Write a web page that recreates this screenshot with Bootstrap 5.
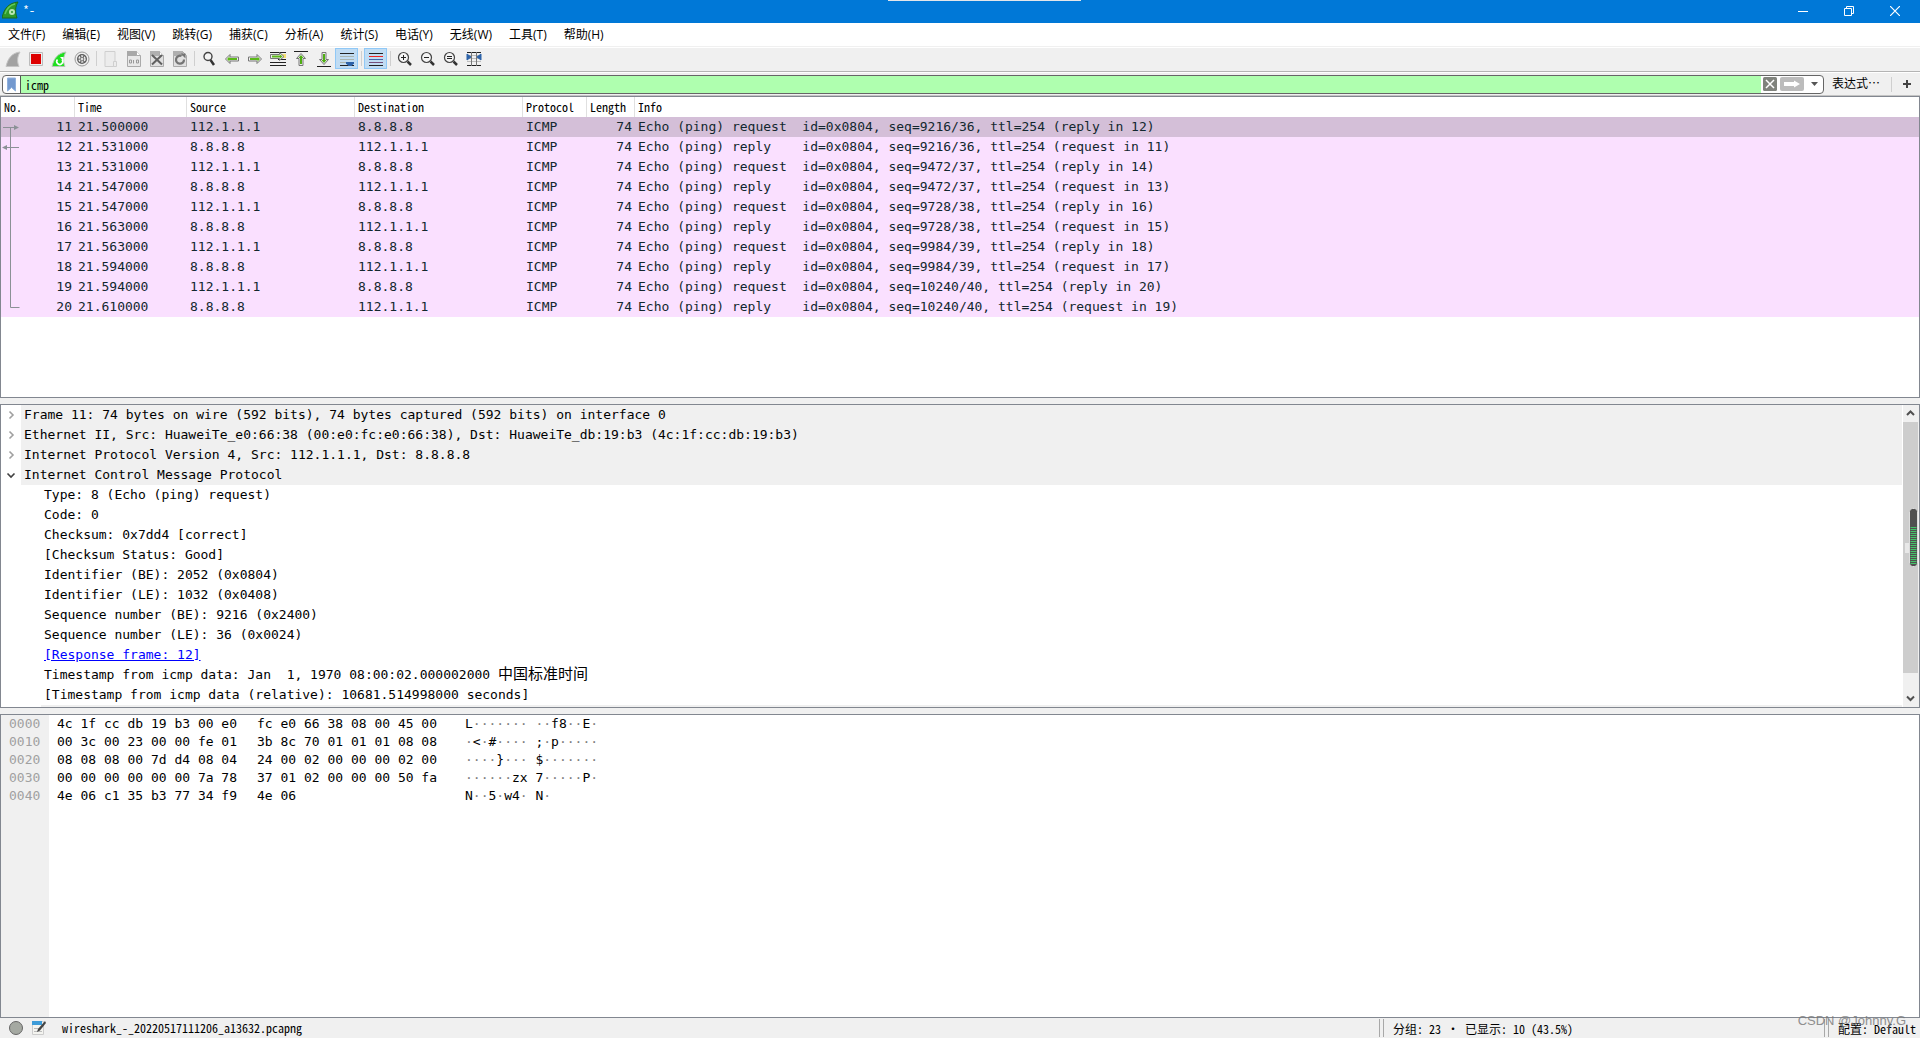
<!DOCTYPE html>
<html lang="zh-CN">
<head>
<meta charset="utf-8">
<meta name="viewport" content="width=device-width, initial-scale=1">
<title>*-</title>
<link href="https://cdn.jsdelivr.net/npm/bootstrap@5.3.0/dist/css/bootstrap.min.css" rel="stylesheet">
<style>
  :root { --ui: "Open Sans", "Noto Sans CJK SC", sans-serif; --song: "Noto Sans Mono CJK SC", "Noto Sans CJK SC", monospace; --mono: "DejaVu Sans Mono", "Noto Sans CJK SC", monospace; --edge: #828790; --chrome: #f0f0f0; }
  body { height: 100vh; overflow: hidden; background: var(--chrome); color: #000; font: 12px/16px var(--ui); }
  button { border: 0; background: none; padding: 0; color: inherit; font: inherit; }
  svg { display: block; }
  .titlebar { height: 23px; background: #0078d7; color: #fff; padding: 0 2px; }
  .titlebar .caption { font: 12px/20px var(--song); padding-left: 4px; }
  .winbtn { width: 46px; height: 21px; display: flex; align-items: center; justify-content: center; }
  .peek { position: absolute; top: 0; left: 46.25%; width: 193px; height: 1px; background: #e3e6ea; }
  .menubar { height: 24px; gap: 1px; background: #fff; border-bottom: 1px solid var(--chrome); }
  .menubar a { color: #000; text-decoration: none; padding: 0 8px; line-height: 23px; }
  .tools { height: 25px; padding-left: 1px; padding-bottom: 2px; border-bottom: 1px solid #b4b4b4; border-top: 1px solid #fff; }
  .tool { width: 23px; height: 21px; display: flex; align-items: center; justify-content: center; border: 1px solid transparent; }
  .tool.on { background: #c0dcf3; border-color: #90c8f6; }
  .rule { width: 6px; display: flex; justify-content: center; }
  .rule::before { content: ""; width: 1px; height: 15px; background: #cfcfcf; }
  .filterbar { height: 24px; border-top: 1px solid #fff; border-bottom: 1px solid #c4c4c4; padding: 2px 4px 2px 2px; }
  .filterbox { height: 19px; border: 1px solid #666; border-radius: 4px; background: #fff; overflow: hidden; }
  .filterbox input { border: 0; border-left: 1px solid #555; outline: 0; background: #afffaf; font: 12px/17px var(--song); padding: 0 4px; height: 17px; min-width: 0; }
  .filterend { padding-left: 2px; gap: 3px; }
  .bm { width: 17px; display: flex; justify-content: center; }
  .drop { width: 16px; display: flex; justify-content: center; }
  .pane { min-height: 0; overflow: hidden; background: #fff; border: 1px solid var(--edge); position: relative; }
  .splitter { height: 6px; }
  .p-list { flex: 302 1 0; } .p-tree, .p-hex { flex: 304 1 0; }
  .packets { table-layout: fixed; width: 100%; border-collapse: separate; border-spacing: 0; white-space: pre; font: 13px/20px var(--mono); color: #12272e; }
  .packets th { font: 12px/20px var(--song); color: #000; border-right: 1px solid #e0e0e0; padding: 0 3px; height: 20px; }
  .packets th:last-child { border: 0; }
  .packets td { padding: 0 3px; height: 20px; }
  .packets tbody { background: #fae0ff; }
  .packets tr.cur { background: #d4bfd8; }
  .num { text-align: right; }
  .c1 { width: 74px; } .c2 { width: 112px; } .c3 { width: 168px; } .c5 { width: 64px; } .c6 { width: 48px; }
  .related { position: absolute; left: 0; top: 20px; }
  .tree { font: 13px/20px var(--mono); list-style: none; margin: 0; padding: 0; overflow: hidden; min-width: 0; }
  .tree > li { display: flex; height: 20px; white-space: pre; }
  .tree .twist { width: 20px; display: flex; align-items: center; justify-content: center; }
  .tree .proto { background: var(--chrome); flex: 1; padding-left: 3px; }
  .tree .leaf { padding-left: 43px; }
  .tree .nextproto { background: var(--chrome); flex: 1; margin-left: 40px; }
  .tree a { color: #00f; }
  .song-lg { font-size: 15px; line-height: 18px; }
  .vbar { width: 16px; margin-left: 1px; background: var(--chrome); }
  .vbar button { height: 17px; display: flex; align-items: center; justify-content: center; width: 15px; }
  .thumb { width: 15px; background: #cdcdcd; flex: 251 1 0; } .track { flex: 17 1 0; }
  .meter { position: absolute; right: 1px; top: 103px; }
  .hex { font: 13px/18px var(--mono); }
  .hex pre { font: inherit; margin: 0; overflow: visible; }
  .offs { width: 48px; background: var(--chrome); color: #a0a0a0; padding-left: 8px; }
  .octets-a { width: 208px; padding-left: 8px; } .octets-b { width: 208px; }
  .asc i { color: #808080; font-style: normal; }
  .statusbar { height: 20px; font: 12px/20px var(--song); padding-left: 8px; }
  .cell { border-left: 1px solid #a8a8a8; height: 18px; position: relative; padding-left: 13px; line-height: 20px; }
  .cell::before { content: ""; position: absolute; left: 3px; top: 0; bottom: 0; width: 1px; background: #a8a8a8; }
  .cell-count { width: 445px; } .cell-conf { width: 96px; white-space: nowrap; }
  .wmark { position: absolute; right: 14px; bottom: 8px; font: 13px/18px "Liberation Sans", sans-serif; color: #777; opacity: .8; }
</style>
<script src="https://cdn.jsdelivr.net/npm/bootstrap@5.3.0/dist/js/bootstrap.bundle.min.js"></script>
</head>
<body class="d-flex flex-column position-relative">

<header class="titlebar d-flex align-items-start flex-shrink-0">
  <svg width="17" height="20" viewBox="0 1 17 20"><path d="M0 19C2 9 7 4 16 3C13 8 13 13 15 19Z" fill="#2e9a2a" stroke="#1b6d1b"/><path d="M3 15C5 9 8 6 13 5" stroke="#62c95c" stroke-width="1.5" fill="none"/><circle cx="10" cy="13" r="3" fill="#b9e6b5"/><circle cx="10" cy="13" r="1" fill="#2e9a2a"/></svg>
  <span class="caption">*-</span>
  <div class="ms-auto d-flex">
    <button class="winbtn" aria-label="最小化"><svg width="10" height="10"><path d="M0 5.5h10" stroke="#fff"/></svg></button>
    <button class="winbtn" aria-label="还原"><svg width="10" height="10" fill="none" stroke="#fff"><path d="M.5 2.500h7v7h-7zM2.500 2.500v-2h7v7h-2"/></svg></button>
    <button class="winbtn" aria-label="关闭"><svg width="10" height="10" stroke="#fff" stroke-width="1.200"><path d="M0 0L10 10M10 0L0 10"/></svg></button>
  </div>
  <div class="peek"></div>
</header>

<nav class="menubar d-flex flex-shrink-0">
  <a href="#">文件(F)</a><a href="#">编辑(E)</a><a href="#">视图(V)</a><a href="#">跳转(G)</a><a href="#">捕获(C)</a><a href="#">分析(A)</a><a href="#">统计(S)</a><a href="#">电话(Y)</a><a href="#">无线(W)</a><a href="#">工具(T)</a><a href="#">帮助(H)</a>
</nav>

<div class="tools d-flex align-items-center flex-shrink-0" role="toolbar">
  <button class="tool" aria-label="开始捕获"><svg width="16" height="16"><path d="M1 15.500C3 7 7 2 15 1C12 6 12 11 14 15.500Z" fill="#a2a2a2" stroke="#c4c4c4"/></svg></button>
  <button class="tool" aria-label="停止捕获"><svg width="16" height="16"><path d="M1.500 1.500h13v13h-13z" fill="#eee" stroke="#bbb"/><path d="M3 3h10v10H3z" fill="#d00"/></svg></button>
  <button class="tool" aria-label="重新开始"><svg width="16" height="16"><path d="M1 15.500C3 7 7 2 15 1C12 6 12 11 14 15.500Z" fill="#1de01d" stroke="#b5c9b5"/><path d="M6.500 8.500a3 3 0 1 0 4.500 0" fill="none" stroke="#fff" stroke-width="1.600"/><path d="M9 6h3.500v4z" fill="#fff"/></svg></button>
  <button class="tool" aria-label="捕获选项"><svg width="16" height="16"><circle cx="8" cy="8" r="7" fill="#eee" stroke="#999"/><circle cx="8" cy="8" r="5" fill="#5c5c5c"/><circle cx="8" cy="8" r="3" fill="none" stroke="#eee" stroke-width="1.500" stroke-dasharray="2.200 1"/><circle cx="8" cy="8" r="1.500" fill="#ddd"/></svg></button>
  <span class="rule"></span>
  <button class="tool" aria-label="打开"><svg width="16" height="16"><path d="M2 .5h10v15H2z" fill="#ececec" stroke="#cfcfcf"/><path d="M10.500 10.500h3v5h-3z" fill="#ececec" stroke="#cfcfcf"/></svg></button>
  <button class="tool" aria-label="保存"><svg width="16" height="16"><path d="M1.500 .5h9l4 4v11h-13z" fill="#e8e8e8" stroke="#aaa"/><path d="M1 0h10v5H1z" fill="#a8a8a8"/><path d="M10.500 .5v4h4" fill="#fff" stroke="#aaa"/><path d="M3.500 9h2v3h-2zM7.500 9v3.500M10.500 9h2v3h-2z" fill="none" stroke="#999"/></svg></button>
  <button class="tool" aria-label="关闭文件"><svg width="16" height="16"><path d="M1.500 .5h9l4 4v11h-13z" fill="#e0e0e0" stroke="#aaa"/><path d="M1 0h10v5H1z" fill="#b0b0b0"/><path d="M10.500 .5v4h4" fill="#fff" stroke="#aaa"/><path d="M3 4L13 13.500M13 4L3 13.500" stroke="#606060" stroke-width="2"/></svg></button>
  <button class="tool" aria-label="重新加载"><svg width="16" height="16"><path d="M1.500 .5h9l4 4v11h-13z" fill="#e0e0e0" stroke="#aaa"/><path d="M1 0h10v5H1z" fill="#b0b0b0"/><path d="M12 8.500A4 4 0 1 1 9.500 5" fill="none" stroke="#757575" stroke-width="2.200"/><path d="M8.500 2.500h5v5z" fill="#757575"/></svg></button>
  <span class="rule"></span>
  <button class="tool" aria-label="查找"><svg width="16" height="16"><circle cx="7" cy="5.500" r="4" fill="#f4f4f4" stroke="#444" stroke-width="1.400"/><path d="M9.500 9L13 14" stroke="#333" stroke-width="2.500"/></svg></button>
  <button class="tool" aria-label="后退"><svg width="16" height="16"><path d="M1.500 8L6 3.500v2.500h8.500v4H6v2.500z" fill="#f0f0f0" stroke="#777"/><path d="M3 8l2.500-2.500V7H13v2H5.500v1.500z" fill="#5cb81a"/></svg></button>
  <button class="tool" aria-label="前进"><svg width="16" height="16"><path d="M14.500 8L10 3.500v2.500H1.500v4H10v2.500z" fill="#f0f0f0" stroke="#777"/><path d="M13 8l-2.500-2.500V7H3v2h7.500v1.500z" fill="#5cb81a"/></svg></button>
  <button class="tool" aria-label="转到分组"><svg width="16" height="16"><path d="M0 1.500h16M0 11.500h16M0 14.500h16M8 8.500h8" stroke="#222"/><path d="M11 3h5v4h-5z" fill="#f5e070"/><path d="M14 5.500L9.500 1.500v2H.5v4h9v2z" fill="#f0f0f0" stroke="#777"/><path d="M12.500 5.500L10 3.500v1H2v2h8v1z" fill="#5cb81a"/></svg></button>
  <button class="tool" aria-label="首个分组"><svg width="16" height="16"><path d="M1 .5h14" stroke="#222"/><path d="M8 2.500L3.500 7.500h2.500v7h4v-7h2.500z" fill="#eee" stroke="#777"/><path d="M8 4L5.500 7H7v6h2V7h1.500z" fill="#4fae12"/></svg></button>
  <button class="tool" aria-label="最新分组"><svg width="16" height="16"><path d="M1 15.500h14" stroke="#222"/><path d="M8 13.500L3.500 8.500h2.500v-7h4v7h2.500z" fill="#eee" stroke="#777"/><path d="M8 12L5.500 9H7V3h2v6h1.500z" fill="#4fae12"/></svg></button>
  <button class="tool on" aria-label="自动滚动"><svg width="16" height="16"><path d="M1 2.500h14M1 14.500h14" stroke="#222"/><path d="M1 5.500h14M1 8.500h14M1 11.500h14" stroke="#aab4ae"/><path d="M7 11h8v1.500l-2.500 2.500h-3L7 12.500z" fill="#2d62a8"/></svg></button>
  <span class="rule"></span>
  <button class="tool on" aria-label="着色"><svg width="16" height="16"><path d="M1 2.500h14M1 14.500h14" stroke="#222"/><path d="M1 5.500h14" stroke="#e22"/><path d="M1 8.500h14" stroke="#4465aa"/><path d="M1 11.500h14" stroke="#75507b"/></svg></button>
  <span class="rule"></span>
  <button class="tool" aria-label="放大"><svg width="16" height="16"><circle cx="6.500" cy="6.500" r="5" fill="#f4f4f4" stroke="#444" stroke-width="1.200"/><path d="M10.500 10.500L14 14" stroke="#333" stroke-width="2.500"/><path d="M4 6.500h5M6.500 4v5" stroke="#222"/></svg></button>
  <button class="tool" aria-label="缩小"><svg width="16" height="16"><circle cx="6.500" cy="6.500" r="5" fill="#f4f4f4" stroke="#444" stroke-width="1.200"/><path d="M10.500 10.500L14 14" stroke="#333" stroke-width="2.500"/><path d="M4 6.500h5" stroke="#222"/></svg></button>
  <button class="tool" aria-label="原始大小"><svg width="16" height="16"><circle cx="6.500" cy="6.500" r="5" fill="#f4f4f4" stroke="#444" stroke-width="1.200"/><path d="M10.500 10.500L14 14" stroke="#333" stroke-width="2.500"/><path d="M4 5.500h5M4 7.500h5" stroke="#222"/></svg></button>
  <button class="tool" aria-label="调整列宽"><svg width="16" height="16"><path d="M1 1.500h14M1 14.500h14" stroke="#222"/><path d="M1 4.500h14M1 7.500h14M1 10.500h14" stroke="#bbb"/><path d="M5.500 1v14M10.500 1v14" stroke="#777"/><path d="M1 3l4 3-4 3zM15 3l-4 3 4 3z" fill="#2d62a8" stroke="#2d62a8"/></svg></button>
</div>

<div class="filterbar d-flex align-items-center flex-shrink-0">
  <div class="filterbox d-flex flex-fill align-items-center">
    <button class="bm" aria-label="书签"><svg width="9" height="15"><path d="M.5 1h8v13l-4-3.500-4 3.500z" fill="#7399cf" stroke="#8fb0dc"/></svg></button>
    <input class="flex-fill" type="text" value="icmp" aria-label="显示过滤器">
    <div class="filterend d-flex align-items-center">
      <button aria-label="清除"><svg width="14" height="14"><rect width="14" height="14" rx="1.500" fill="#80837d"/><path d="M3 3l8 8M11 3l-8 8" stroke="#fff" stroke-width="1.500"/></svg></button>
      <button aria-label="应用"><svg width="24" height="14"><rect width="24" height="14" rx="2" fill="#bcbcbc"/><path d="M4 5h10V3.500L20 7l-6 3.500V9H4z" fill="#fff"/></svg></button>
      <button class="drop" aria-label="历史"><svg width="7" height="5"><path d="M0 0h7L3.500 4z" fill="#555"/></svg></button>
    </div>
  </div>
  <button class="ps-2 pe-1">表达式⋯</button>
  <span class="rule ms-1"></span>
  <button class="ps-2 pe-1" aria-label="添加"><svg width="10" height="10"><path d="M1 5h8M5 1v8" stroke="#444" stroke-width="2"/></svg></button>
</div>

<main class="d-flex flex-column flex-fill overflow-hidden">
  <section class="pane p-list">
    <table class="packets">
      <colgroup><col class="c1"><col class="c2"><col class="c3"><col class="c3"><col class="c5"><col class="c6"><col></colgroup>
      <thead><tr><th>No.</th><th>Time</th><th>Source</th><th>Destination</th><th>Protocol</th><th>Length</th><th>Info</th></tr></thead>
      <tbody>
        <tr class="cur"><td class="num">11</td><td>21.500000</td><td>112.1.1.1</td><td>8.8.8.8</td><td>ICMP</td><td class="num">74</td><td>Echo (ping) request  id=0x0804, seq=9216/36, ttl=254 (reply in 12)</td></tr>
        <tr><td class="num">12</td><td>21.531000</td><td>8.8.8.8</td><td>112.1.1.1</td><td>ICMP</td><td class="num">74</td><td>Echo (ping) reply    id=0x0804, seq=9216/36, ttl=254 (request in 11)</td></tr>
        <tr><td class="num">13</td><td>21.531000</td><td>112.1.1.1</td><td>8.8.8.8</td><td>ICMP</td><td class="num">74</td><td>Echo (ping) request  id=0x0804, seq=9472/37, ttl=254 (reply in 14)</td></tr>
        <tr><td class="num">14</td><td>21.547000</td><td>8.8.8.8</td><td>112.1.1.1</td><td>ICMP</td><td class="num">74</td><td>Echo (ping) reply    id=0x0804, seq=9472/37, ttl=254 (request in 13)</td></tr>
        <tr><td class="num">15</td><td>21.547000</td><td>112.1.1.1</td><td>8.8.8.8</td><td>ICMP</td><td class="num">74</td><td>Echo (ping) request  id=0x0804, seq=9728/38, ttl=254 (reply in 16)</td></tr>
        <tr><td class="num">16</td><td>21.563000</td><td>8.8.8.8</td><td>112.1.1.1</td><td>ICMP</td><td class="num">74</td><td>Echo (ping) reply    id=0x0804, seq=9728/38, ttl=254 (request in 15)</td></tr>
        <tr><td class="num">17</td><td>21.563000</td><td>112.1.1.1</td><td>8.8.8.8</td><td>ICMP</td><td class="num">74</td><td>Echo (ping) request  id=0x0804, seq=9984/39, ttl=254 (reply in 18)</td></tr>
        <tr><td class="num">18</td><td>21.594000</td><td>8.8.8.8</td><td>112.1.1.1</td><td>ICMP</td><td class="num">74</td><td>Echo (ping) reply    id=0x0804, seq=9984/39, ttl=254 (request in 17)</td></tr>
        <tr><td class="num">19</td><td>21.594000</td><td>112.1.1.1</td><td>8.8.8.8</td><td>ICMP</td><td class="num">74</td><td>Echo (ping) request  id=0x0804, seq=10240/40, ttl=254 (reply in 20)</td></tr>
        <tr><td class="num">20</td><td>21.610000</td><td>8.8.8.8</td><td>112.1.1.1</td><td>ICMP</td><td class="num">74</td><td>Echo (ping) reply    id=0x0804, seq=10240/40, ttl=254 (request in 19)</td></tr>
      </tbody>
    </table>
    <svg class="related" width="20" height="200" fill="none" stroke="#8b9196"><path d="M2 10.500h14M9.500 10.500v180h9M5 30.500h13"/><path d="M13 8l5 2.500-5 2.500zM6 28l-5 2.500 5 2.500z" fill="#8b9196" stroke="none"/></svg>
  </section>
  <div class="splitter flex-shrink-0"></div>
  <section class="pane p-tree d-flex">
    <ul class="tree flex-fill">
      <li><span class="twist"><svg width="7" height="10"><path d="M1.500 1.500L5 5l-3.500 3.500" fill="none" stroke="#a0a0a0" stroke-width="1.600"/></svg></span><span class="proto">Frame 11: 74 bytes on wire (592 bits), 74 bytes captured (592 bits) on interface 0</span></li>
      <li><span class="twist"><svg width="7" height="10"><path d="M1.500 1.500L5 5l-3.500 3.500" fill="none" stroke="#a0a0a0" stroke-width="1.600"/></svg></span><span class="proto">Ethernet II, Src: HuaweiTe_e0:66:38 (00:e0:fc:e0:66:38), Dst: HuaweiTe_db:19:b3 (4c:1f:cc:db:19:b3)</span></li>
      <li><span class="twist"><svg width="7" height="10"><path d="M1.500 1.500L5 5l-3.500 3.500" fill="none" stroke="#a0a0a0" stroke-width="1.600"/></svg></span><span class="proto">Internet Protocol Version 4, Src: 112.1.1.1, Dst: 8.8.8.8</span></li>
      <li><span class="twist"><svg width="10" height="7"><path d="M1.500 1.500L5 5l3.500-3.500" fill="none" stroke="#404040" stroke-width="1.600"/></svg></span><span class="proto">Internet Control Message Protocol</span></li>
      <li><span class="leaf">Type: 8 (Echo (ping) request)</span></li>
      <li><span class="leaf">Code: 0</span></li>
      <li><span class="leaf">Checksum: 0x7dd4 [correct]</span></li>
      <li><span class="leaf">[Checksum Status: Good]</span></li>
      <li><span class="leaf">Identifier (BE): 2052 (0x0804)</span></li>
      <li><span class="leaf">Identifier (LE): 1032 (0x0408)</span></li>
      <li><span class="leaf">Sequence number (BE): 9216 (0x2400)</span></li>
      <li><span class="leaf">Sequence number (LE): 36 (0x0024)</span></li>
      <li><span class="leaf"><a href="#">[Response frame: 12]</a></span></li>
      <li><span class="leaf">Timestamp from icmp data: Jan  1, 1970 08:00:02.000002000 <span class="song-lg">中国标准时间</span></span></li>
      <li><span class="leaf">[Timestamp from icmp data (relative): 10681.514998000 seconds]</span></li>
      <li><span class="nextproto"></span></li>
    </ul>
    <div class="vbar d-flex flex-column flex-shrink-0">
      <button aria-label="向上滚动"><svg width="9" height="7"><path d="M1 5l3.500-3.500L8 5" fill="none" stroke="#505050" stroke-width="2"/></svg></button>
      <div class="thumb"></div><div class="track"></div>
      <button aria-label="向下滚动"><svg width="9" height="7"><path d="M1 1.500L4.500 5 8 1.500" fill="none" stroke="#505050" stroke-width="2"/></svg></button>
    </div>
    <svg class="meter" width="13" height="60"><path d="M0 35h4v10H0z" fill="#e8e8e8"/><rect x="4.500" y=".5" width="8" height="58" rx="3" fill="#505050" stroke="#ddd"/><path d="M8.500 19v38" stroke="#45c46a" stroke-width="6" stroke-dasharray="1 1"/></svg>
  </section>
  <div class="splitter flex-shrink-0"></div>
  <section class="pane p-hex hex d-flex">
<pre class="offs">0000
0010
0020
0030
0040</pre>
<pre class="octets-a">4c 1f cc db 19 b3 00 e0
00 3c 00 23 00 00 fe 01
08 08 08 00 7d d4 08 04
00 00 00 00 00 00 7a 78
4e 06 c1 35 b3 77 34 f9</pre>
<pre class="octets-b">fc e0 66 38 08 00 45 00
3b 8c 70 01 01 01 08 08
24 00 02 00 00 00 02 00
37 01 02 00 00 00 50 fa
4e 06</pre>
<pre class="asc">L<i>·······</i> <i>··</i>f8<i>··</i>E<i>·</i>
<i>·</i>&lt;<i>·</i>#<i>····</i> ;<i>·</i>p<i>·····</i>
<i>····</i>}<i>···</i> $<i>·······</i>
<i>······</i>zx 7<i>·····</i>P<i>·</i>
N<i>··</i>5<i>·</i>w4<i>·</i> N<i>·</i></pre>
  </section>
</main>

<footer class="statusbar d-flex flex-shrink-0 align-items-center">
  <svg width="16" height="16"><circle cx="8" cy="8" r="6.500" fill="#a5a9a2" stroke="#666"/></svg>
  <svg class="ms-2" width="14" height="16"><path d="M.5 1.500h11v13H.5z" fill="#f4f4f0" stroke="#ccc"/><path d="M0 1h10v4H0z" fill="#3d9bd8"/><path d="M2 8.500h5M2 11.500h8" stroke="#bbb"/><path d="M13 1L6 9l-1 3 3-1.500L14 3z" fill="#444"/></svg>
  <span class="flex-fill ps-3">wireshark_-_20220517111206_a13632.pcapng</span>
  <span class="cell cell-count">分组: 23 · 已显示: 10 (43.5%)</span>
  <button class="cell cell-conf text-start">配置: Default</button>
</footer>
<div class="wmark">CSDN @Johnny.G</div>
</body>
</html>
